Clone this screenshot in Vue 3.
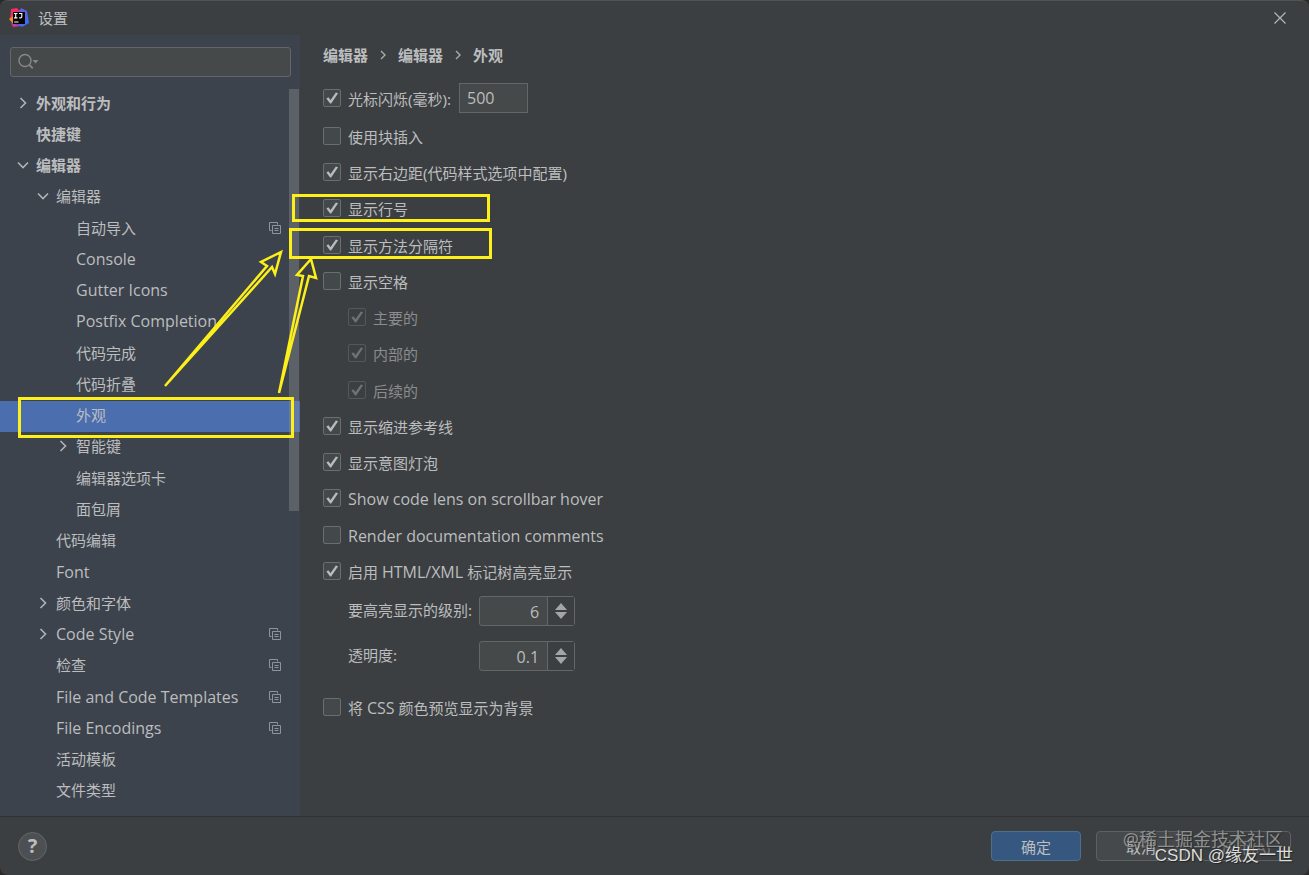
<script setup>
  import { ref } from 'vue';

  const search = ref("");
  const selected = ref("look");

  const tree = [
    { id: "behavior", name: "外观和行为", level: 0, arrow: "right" },
    { id: "keymap", name: "快捷键", level: 0 },
    { id: "editor", name: "编辑器", level: 0, arrow: "down" },
    { id: "general", name: "编辑器", level: 1, arrow: "down" },
    { id: "import", name: "自动导入", level: 2, copy: true },
    { id: "console", name: "Console", level: 2 },
    { id: "gutter", name: "Gutter Icons", level: 2 },
    { id: "postfix", name: "Postfix Completion", level: 2 },
    { id: "completion", name: "代码完成", level: 2 },
    { id: "folding", name: "代码折叠", level: 2 },
    { id: "look", name: "外观", level: 2 },
    { id: "smart", name: "智能键", level: 2, arrow: "right" },
    { id: "tabs", name: "编辑器选项卡", level: 2 },
    { id: "crumbs", name: "面包屑", level: 2 },
    { id: "editing", name: "代码编辑", level: 1 },
    { id: "font", name: "Font", level: 1 },
    { id: "colors", name: "颜色和字体", level: 1, arrow: "right" },
    { id: "style", name: "Code Style", level: 1, arrow: "right", copy: true },
    { id: "inspect", name: "检查", level: 1, copy: true },
    { id: "templates", name: "File and Code Templates", level: 1, copy: true },
    { id: "encodings", name: "File Encodings", level: 1, copy: true },
    { id: "live", name: "活动模板", level: 1 },
    { id: "types", name: "文件类型", level: 1 },
  ];

  const blink = ref(true);
  const blinkMs = ref("500");
  const groups = ref([
    [
      { id: "block", name: "使用块插入", on: false },
      { id: "margin", name: "显示右边距(代码样式选项中配置)", on: true },
      { id: "lines", name: "显示行号", on: true, mark: "mark-lines" },
    ],
    [
      { id: "methods", name: "显示方法分隔符", on: true, mark: "mark-methods" },
      { id: "spaces", name: "显示空格", on: false },
      { id: "leading", name: "主要的", on: true, sub: true },
      { id: "inner", name: "内部的", on: true, sub: true },
    ],
    [
      { id: "trailing", name: "后续的", on: true, sub: true },
      { id: "indent", name: "显示缩进参考线", on: true },
      { id: "bulb", name: "显示意图灯泡", on: true },
      { id: "lens", name: "Show code lens on scrollbar hover", on: true },
    ],
    [
      { id: "docs", name: "Render documentation comments", on: false },
      { id: "tags", name: "启用 HTML/XML 标记树高亮显示", on: true },
    ],
  ]);
  const levels = ref(6);
  const opacity = ref(0.1);
  const cssPreview = ref(false);

  // latin words are set a bit larger than the chinese text
  const parts = (text) => text.split(/([A-Za-z][A-Za-z/ ]*)/).filter(p => p);
  const isLatin = (text) => /^[A-Za-z]/.test(text);

  const step = (dir) => {
    levels.value = Math.max(1, levels.value + dir);
  }
  const stepOpacity = (dir) => {
    opacity.value = Math.max(0, Math.round(opacity.value * 10 + dir) / 10);
  }
</script>

<template>
  <div class="dialog">
    <header class="title-bar">
      <svg class="logo" viewBox="0 0 20 20" width="20" height="20">
        <path d="M2 1 L8 0 L11 4 L6 14 L1 12 Z" fill="#ee2f66" />
        <path d="M0 11 L4 8 L8 15 L5 17 Z" fill="#f58a2c" />
        <path d="M12 0 L18 3 L20 15 L13 19 L9 17 Z" fill="#3f6bf0" />
        <path d="M10 2 L14 1 L17 4 L17 12 L10 10 Z" fill="#6f5ae0" />
        <path d="M2 15 L7 16 L12 18 L4 19 Z" fill="#c138a8" />
        <rect x="4" y="4" width="12" height="12" fill="#050505" />
        <path d="M5 5.5h3.4M6.7 5.5v4.4M5 9.9h3.4M10 5.5h2.8v3.2q0 1.2-1.4 1.2h-1.2M5.2 14h4.3" stroke="#fff" stroke-width="1.1" fill="none" />
      </svg>
      <h1>设置</h1>
      <button class="close" aria-label="关闭">
        <svg viewBox="0 0 12 12" width="12" height="12"><path d="M.5.5l11 11M11.5.5l-11 11" stroke="#b4b6b7" stroke-width="1.2" /></svg>
      </button>
    </header>

    <div class="body">
      <aside class="sidebar">
        <div class="search">
          <svg viewBox="0 0 22 18" width="22" height="18">
            <circle cx="7" cy="7.5" r="6" fill="none" stroke="#858889" stroke-width="1.4" />
            <path d="M11.2 11.7l3.6 3.6" stroke="#858889" stroke-width="1.8" />
            <path d="M14.5 7h6l-3 3.4z" fill="#858889" />
          </svg>
          <input type="text" aria-label="搜索" v-model="search">
        </div>
        <nav class="tree">
          <a v-for="item in tree" :key="item.id" href="#" class="node"
            :class="['level-' + item.level, { selected: selected === item.id }]"
            @click.prevent="selected = item.id">
            <svg class="arrow" viewBox="0 0 12 12" width="12" height="12">
              <path v-if="item.arrow === 'right'" d="M3.5 1l5 5-5 5" />
              <path v-if="item.arrow === 'down'" d="M1 3.5l5 5 5-5" />
            </svg>
            <span class="name" :class="{ latin: isLatin(item.name) }">{{ item.name }}</span>
            <svg v-if="item.copy" class="copy" viewBox="0 0 12 12" width="12" height="12">
              <path d="M2.5 8.5h-2v-8h8v2M3.5 3.5h8v8h-8zM5.5 6.5h4M5.5 8.5h4" />
            </svg>
          </a>
          <div class="scroll-thumb"></div>
          <div class="mark mark-selected"></div>
        </nav>
      </aside>

      <main class="content">
        <div class="crumbs">
          <span>编辑器</span>
          <svg viewBox="0 0 6 10" width="6" height="10"><path d="M1 1l4 4-4 4" /></svg>
          <span>编辑器</span>
          <svg viewBox="0 0 6 10" width="6" height="10"><path d="M1 1l4 4-4 4" /></svg>
          <span>外观</span>
        </div>

        <div class="option">
          <input type="checkbox" id="blink" v-model="blink">
          <label for="blink">光标闪烁(毫秒):</label>
          <input type="text" class="ms" aria-label="毫秒" v-model="blinkMs">
        </div>

        <div class="groups">
          <div v-for="(group, i) in groups" :key="i">
            <div v-for="opt in group" :key="opt.id" class="option" :class="{ sub: opt.sub }">
              <input type="checkbox" :id="opt.id" v-model="opt.on" :disabled="opt.sub">
              <label :for="opt.id"><span v-for="p in parts(opt.name)" :key="p" :class="{ latin: isLatin(p) }">{{ p }}</span></label>
              <div v-if="opt.mark" class="mark" :class="opt.mark"></div>
            </div>
          </div>
        </div>

        <div class="spinners">
          <label for="levels">要高亮显示的级别:</label>
          <div class="spinner">
            <input type="text" id="levels" v-model.number="levels">
            <div class="steps">
              <button aria-label="增加" @click="step(1)"><svg viewBox="0 0 12 7" width="12" height="7"><path d="M0 7l6-7 6 7z" /></svg></button>
              <button aria-label="减少" @click="step(-1)"><svg viewBox="0 0 12 7" width="12" height="7"><path d="M0 0l6 7 6-7z" /></svg></button>
            </div>
          </div>
          <label for="opacity">透明度:</label>
          <div class="spinner">
            <input type="text" id="opacity" v-model.number="opacity">
            <div class="steps">
              <button aria-label="增加" @click="stepOpacity(1)"><svg viewBox="0 0 12 7" width="12" height="7"><path d="M0 7l6-7 6 7z" /></svg></button>
              <button aria-label="减少" @click="stepOpacity(-1)"><svg viewBox="0 0 12 7" width="12" height="7"><path d="M0 0l6 7 6-7z" /></svg></button>
            </div>
          </div>
        </div>

        <div class="option">
          <input type="checkbox" id="css" v-model="cssPreview">
          <label for="css">将 <span class="latin">CSS</span> 颜色预览显示为背景</label>
        </div>
      </main>
    </div>

    <footer class="footer">
      <button class="help" aria-label="帮助">?</button>
      <button class="btn primary">确定</button>
      <button class="btn">取消</button>
      <button class="btn" disabled>应用(A)</button>
      <div class="watermark first">@稀土掘金技术社区</div>
      <div class="watermark second">CSDN @缘友一世</div>
    </footer>

    <!-- hand drawn arrows over the window -->
    <svg class="arrows" viewBox="0 0 160 150" width="160" height="150">
      <path d="M5 137L107 17L101 13L121 3L115 25L112 18Z" />
      <path d="M119 144L143 27L137 26L151 10L156 29L149 27Z" />
    </svg>
  </div>
</template>

<style>
html, body {
  background: #2b2b2b;
}
</style>

<style scoped>
.dialog {
  position: relative;
  display: flex;
  flex-direction: column;
  box-sizing: border-box;
  min-height: 100vh;
  border-top: 1px solid #515354;
  border-radius: 8px;
  overflow: hidden;
  background: #3c3f41;
  color: #bbbdbf;
  font-family: "Noto Sans", "Noto Sans CJK SC", sans-serif;
  font-size: 15px;
  line-height: 20px;
}

input, button {
  box-sizing: border-box;
  margin: 0;
  font: inherit;
  color: inherit;
}

.latin, input[type="text"] {
  font-family: "Open Sans", "Noto Sans CJK SC", sans-serif;
  font-size: 16px;
}

.title-bar {
  display: flex;
  align-items: center;
  height: 34px;
  padding: 0 23px 0 9px;
}

.title-bar h1 {
  flex: 1;
  margin: 0 0 0 9px;
  font-size: 15px;
  font-weight: 400;
}

.close {
  display: flex;
  padding: 0;
  border: none;
  background: none;
}

.body {
  display: flex;
  flex: 1;
}

.sidebar {
  display: flex;
  flex-direction: column;
  width: 300px;
  background: #3d434c;
}

.search {
  display: flex;
  align-items: center;
  box-sizing: border-box;
  height: 30px;
  margin: 12px 9px 11px 10px;
  padding-left: 7px;
  border: 1px solid #646768;
  border-radius: 3px;
  background: #45494a;
}

.search input {
  flex: 1;
  min-width: 0;
  border: none;
  outline: none;
  background: none;
}

.tree {
  position: relative;
  display: grid;
  flex: 1;
  grid-auto-rows: 1fr;
  padding-bottom: 9px;
}

.node {
  display: flex;
  align-items: center;
  padding: 0 19px 2px 17px;
  color: inherit;
  text-decoration: none;
}

.level-0 {
  font-weight: 700;
}

.level-1 {
  padding-left: 37px;
}

.level-2 {
  padding-left: 57px;
}

.selected {
  background: #4b6eaf;
}

.arrow {
  margin-right: 7px;
  fill: none;
  stroke: #b0b3b5;
  stroke-width: 1.6;
}

.name {
  flex: 1;
  white-space: nowrap;
}

.copy {
  fill: none;
  stroke: #8d949b;
}

.scroll-thumb {
  position: absolute;
  top: 1px;
  right: 1px;
  width: 10px;
  height: 422px;
  background: rgba(140, 142, 144, 0.4);
}

.mark {
  position: absolute;
  box-sizing: border-box;
  border: 3px solid #fdf01a;
  pointer-events: none;
}

.mark-selected {
  top: 309px;
  left: 18px;
  width: 276px;
  height: 41px;
}

.mark-lines {
  top: 4px;
  left: -31px;
  width: 198px;
  height: 28px;
}

.mark-methods {
  top: 1px;
  left: -34px;
  width: 203px;
  height: 31px;
}

.content {
  flex: 1;
  padding: 10px 23px;
}

.crumbs {
  display: flex;
  align-items: center;
  gap: 12px;
  margin-bottom: 15px;
  font-weight: 700;
}

.crumbs svg {
  fill: none;
  stroke: #a9abad;
  stroke-width: 1.4;
}

.option {
  position: relative;
  display: flex;
  align-items: center;
  height: 36px;
}

.option label {
  padding: 2px 0 0 7px;
  white-space: pre-wrap;
}

.sub {
  padding-left: 25px;
  color: #8a8c8d;
}

input[type="checkbox"] {
  appearance: none;
  width: 18px;
  height: 18px;
  border: 1px solid #6b6e70;
  border-radius: 2px;
  background: #43494a;
}

input[type="checkbox"]:checked::before {
  content: "";
  display: block;
  width: 16px;
  height: 16px;
  background: #b8babb;
  clip-path: polygon(15% 53%, 27% 46%, 41% 63%, 74% 15%, 88% 21%, 45% 84%, 38% 84%);
}

input[type="checkbox"]:disabled {
  border-color: #55585a;
  background: none;
}

input[type="checkbox"]:disabled::before {
  background: #6f7274;
}

.ms {
  width: 69px;
  height: 30px;
  margin-left: 8px;
  padding: 0 7px;
  border: 1px solid #646768;
  background: #45494a;
  outline: none;
}

.groups {
  display: grid;
  gap: 1px;
  margin-top: 2px;
}

.spinners {
  display: grid;
  grid-template-columns: max-content 96px;
  gap: 15px 7px;
  margin: 7px 0 18px 25px;
}

.spinner {
  display: flex;
  box-sizing: border-box;
  height: 30px;
  border: 1px solid #646768;
  border-radius: 3px;
  background: #45494a;
}

.spinners label {
  padding-top: 4px;
}

.spinner input {
  flex: 1;
  min-width: 0;
  padding: 1px 8px 0;
  border: none;
  outline: none;
  background: none;
  text-align: right;
}

.steps {
  display: flex;
  flex-direction: column;
  justify-content: center;
  gap: 2px;
  width: 26px;
  border-left: 1px solid #646768;
  background: #3c3f41;
}

.steps button {
  display: flex;
  justify-content: center;
  padding: 0;
  border: none;
  background: none;
}

.steps path {
  fill: #a3a5a6;
}

.footer {
  position: relative;
  display: flex;
  align-items: center;
  gap: 15px;
  box-sizing: border-box;
  height: 59px;
  padding: 0 18px;
  border-top: 1px solid #2f3133;
}

.help {
  width: 29px;
  height: 29px;
  margin-right: auto;
  padding: 0;
  border: 1px solid #646768;
  border-radius: 50%;
  background: #4c5052;
  font-size: 20px;
  font-weight: 700;
}

.btn {
  width: 90px;
  height: 30px;
  padding: 2px 0 0;
  border: 1px solid #5e6162;
  border-radius: 4px;
  background: #45494b;
}

.primary {
  border-color: #4c708c;
  background: #365880;
}

.btn:disabled {
  background: none;
  color: #777a7b;
}

.watermark {
  position: absolute;
  line-height: 20px;
  white-space: nowrap;
}

.first {
  top: 12px;
  right: 26px;
  font-size: 18px;
  color: #8e9091;
  text-shadow: 1px 1px 1px #2b2d2e;
}

.second {
  top: 29px;
  right: 16px;
  font-family: "Liberation Sans", "Noto Sans CJK SC", sans-serif;
  font-size: 17px;
  color: #dcdddd;
  text-shadow: 1px 1px 1px #222;
}

.arrows {
  position: absolute;
  top: 248px;
  left: 160px;
  pointer-events: none;
}

.arrows path {
  fill: none;
  stroke: #fdf01a;
  stroke-width: 2.5;
}
</style>
